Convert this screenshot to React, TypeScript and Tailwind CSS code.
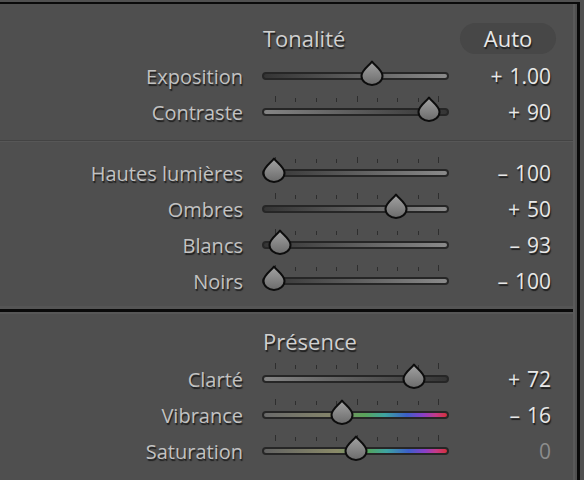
import React from "react";

type Row = {
  label: string;
  sign?: string;
  value: string;
  pos: number; // 0..1
  ticks?: boolean;
  track: string;
  dim?: boolean;
};

const font = { fontFamily: '"Open Sans", "Liberation Sans", sans-serif' };

function Thumb({ pos }: { pos: number }) {
  const x = 12 + pos * 163;
  return (
    <svg
      className="absolute top-[-12px]"
      style={{ left: x - 12 }}
      width="24"
      height="26"
      viewBox="0 0 24 26"
    >
      <defs>
        <linearGradient id="thumbFill" x1="0" y1="0" x2="0" y2="1">
          <stop offset="0" stopColor="#a3a3a3" />
          <stop offset="1" stopColor="#6b6b6b" />
        </linearGradient>
      </defs>
      <path
        d="M12 1.5 C14 5 22.5 10 22.5 16 A10.5 9 0 0 1 1.5 16 C1.5 10 10 5 12 1.5 Z"
        fill="url(#thumbFill)"
        stroke="#0d0d0d"
        strokeWidth="2"
        strokeLinejoin="round"
      />
    </svg>
  );
}

function Ticks() {
  const ticks = Array.from({ length: 9 }, (_, i) => i);
  return (
    <div className="absolute left-0 top-[-13px] h-[7px] w-full">
      {ticks.map((i) => {
        const tall = i === 0 || i === 4 || i === 8;
        return (
          <div
            key={i}
            className={
              tall
                ? "absolute bottom-0 h-[6px] w-[1px] bg-[#2e2e2e]"
                : "absolute bottom-0 h-[4px] w-[1px] bg-[#2e2e2e]"
            }
            style={{ left: 13 + i * 20.4 }}
          />
        );
      })}
    </div>
  );
}

function SliderRow({ row }: { row: Row }) {
  return (
    <div className="flex h-[36px] items-center">
      <div className="w-[243px] translate-y-[1px] text-right text-[20px] text-[#c2c2c2] [text-shadow:1px_2px_1px_#1e1e1e]">
        {row.label}
      </div>
      <div className="relative ml-[19px] h-[8px] w-[187px]">
        {row.ticks && <Ticks />}
        <div className={"h-[8px] w-full rounded-full border-2 border-[#262626] " + row.track} />
        <Thumb pos={row.pos} />
      </div>
      <div
        className={
          row.dim
            ? "flex w-[102px] translate-y-[1px] justify-end text-[21px] text-[#8c8c8c]"
            : "flex w-[102px] translate-y-[1px] justify-end text-[21px] text-[#e8e8e8] [text-shadow:1px_2px_1px_#1e1e1e]"
        }
      >
        {row.sign && <span className="mr-[7px]">{row.sign}</span>}
        <span>{row.value}</span>
      </div>
    </div>
  );
}

function Header({ title, auto }: { title: string; auto?: boolean }) {
  return (
    <div className="flex h-[39px] items-center">
      <div className="w-[263px]" />
      <div className="flex-1 text-[22px] text-[#d0d0d0] [text-shadow:1px_2px_1px_#1e1e1e]">{title}</div>
      {auto && (
        <div className="mr-[17px] flex h-[31px] w-[96px] items-center justify-center rounded-full bg-[#474747] text-[22px] text-[#e8e8e8] [text-shadow:1px_2px_1px_#1e1e1e]">
          Auto
        </div>
      )}
    </div>
  );
}

const darkToLight = "bg-gradient-to-r from-[#353535] to-[#8a8a8a]";
const lightToDark = "bg-gradient-to-r from-[#858585] to-[#353535]";
const vibrance =
  "bg-[linear-gradient(to_right,#6a6a6a_0%,#85856a_38%,#5aa35a_55%,#3ea3a0_66%,#3c5fc8_78%,#8a3fc6_87%,#c43a86_94%,#d2303c_100%)]";
const saturation =
  "bg-[linear-gradient(to_right,#626262_0%,#8a8a68_40%,#55a358_56%,#3ea4a2_67%,#3d5fca_79%,#8b3fc8_88%,#c63a88_94%,#d4303c_100%)]";

const tone1: Row[] = [
  { label: "Exposition", sign: "+", value: "1.00", pos: 0.6, track: darkToLight },
  { label: "Contraste", sign: "+", value: "90", pos: 0.95, ticks: true, track: lightToDark },
];

const tone2: Row[] = [
  { label: "Hautes lumières", sign: "–", value: "100", pos: 0, ticks: true, track: darkToLight },
  { label: "Ombres", sign: "+", value: "50", pos: 0.75, ticks: true, track: darkToLight },
  { label: "Blancs", sign: "–", value: "93", pos: 0.035, ticks: true, track: darkToLight },
  { label: "Noirs", sign: "–", value: "100", pos: 0, ticks: true, track: darkToLight },
];

const presence: Row[] = [
  { label: "Clarté", sign: "+", value: "72", pos: 0.86, ticks: true, track: lightToDark },
  { label: "Vibrance", sign: "–", value: "16", pos: 0.42, ticks: true, track: vibrance },
  { label: "Saturation", value: "0", pos: 0.5, ticks: true, track: saturation, dim: true },
];

export default function App() {
  return (
    <div className="h-[480px] w-[584px] overflow-hidden bg-[#505050]" style={font}>
      <div className="h-[2px] w-full bg-[#505050]" />
      <div className="flex h-[478px]">
        <div className="flex w-[580px] border-t-2 border-r-[3px] border-[#0a0a0a]">
          <div className="flex w-[575px] flex-col border-r-2 border-[#5a5a5a] bg-[#4f4f4f]">
            {/* Tonalité */}
            <div className="flex h-[136px] flex-col pt-[15px]">
              <Header title="Tonalité" auto />
              {tone1.map((r) => (
                <SliderRow key={r.label} row={r} />
              ))}
            </div>
            <div className="h-[1px] bg-[#434343]" />
            <div className="h-[1px] bg-[#575757]" />
            <div className="flex h-[164px] flex-col pt-[13px]">
              {tone2.map((r) => (
                <SliderRow key={r.label} row={r} />
              ))}
            </div>
            <div className="h-[3px] bg-[#555555]" />
            <div className="h-[3px] bg-[#0a0a0a]" />
            <div className="h-[2px] bg-[#575757]" />
            {/* Présence */}
            <div className="flex flex-col pt-[8px]">
              <Header title="Présence" />
              {presence.map((r) => (
                <SliderRow key={r.label} row={r} />
              ))}
            </div>
          </div>
        </div>
        <div className="flex-1 bg-[#505050]" />
      </div>
    </div>
  );
}
